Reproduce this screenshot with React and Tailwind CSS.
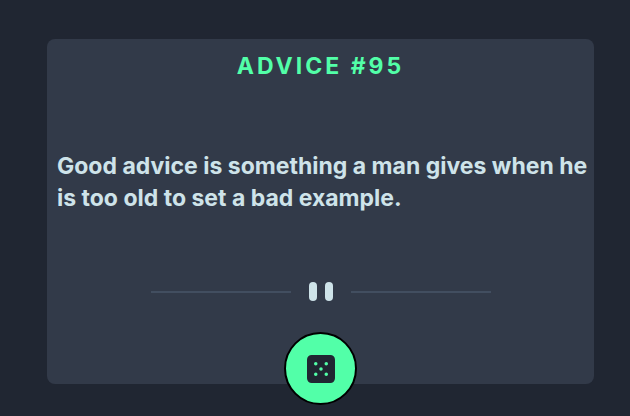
function DiceIcon() {
  return (
    <svg viewBox="0 0 24 24" className="size-7" fill="#202632" aria-hidden="true">
      <path
        fillRule="evenodd"
        d="M20 0H4a4.005 4.005 0 0 0-4 4v16a4.005 4.005 0 0 0 4 4h16a4.005 4.005 0 0 0 4-4V4a4.005 4.005 0 0 0-4-4ZM7.5 18a1.5 1.5 0 1 1 0-3 1.5 1.5 0 0 1 0 3Zm0-9a1.5 1.5 0 1 1 0-3 1.5 1.5 0 0 1 0 3Zm4.5 4.5a1.5 1.5 0 1 1 0-3 1.5 1.5 0 0 1 0 3Zm4.5 4.5a1.5 1.5 0 1 1 0-3 1.5 1.5 0 0 1 0 3Zm0-9a1.5 1.5 0 1 1 0-3 1.5 1.5 0 0 1 0 3Z"
      />
    </svg>
  );
}

function Divider() {
  return (
    <div className="mt-[68px] flex w-full items-center justify-center gap-[18px]" aria-hidden="true">
      <span className="h-0.5 w-[140px] bg-[#424e60]" />
      <span className="flex gap-2">
        <span className="h-[19px] w-2 rounded-full bg-[#cee3e9]" />
        <span className="h-[19px] w-2 rounded-full bg-[#cee3e9]" />
      </span>
      <span className="h-0.5 w-[140px] bg-[#424e60]" />
    </div>
  );
}

export default function App() {
  return (
    <main className="min-h-screen bg-[#202632] pt-[39px] pr-9 pl-[47px] font-['Inter',sans-serif] text-[23px] leading-8 font-bold">
      <section className="flex flex-col items-center rounded-lg bg-[#323a49] pt-[11px]">
        <h1 className="tracking-[3px] text-[#52ffa8]">ADVICE #95</h1>
        <p className="mt-[68px] w-full pr-1 pl-[10px] text-[#cee3e9]">
          Good advice is something a man gives when he is too old to set a bad example.
        </p>
        <Divider />
        <button
          type="button"
          aria-label="Get new advice"
          className="mt-[31px] mb-[-21px] flex size-[73px] items-center justify-center rounded-full border-2 border-black bg-[#52ffa8]"
        >
          <DiceIcon />
        </button>
      </section>
    </main>
  );
}
